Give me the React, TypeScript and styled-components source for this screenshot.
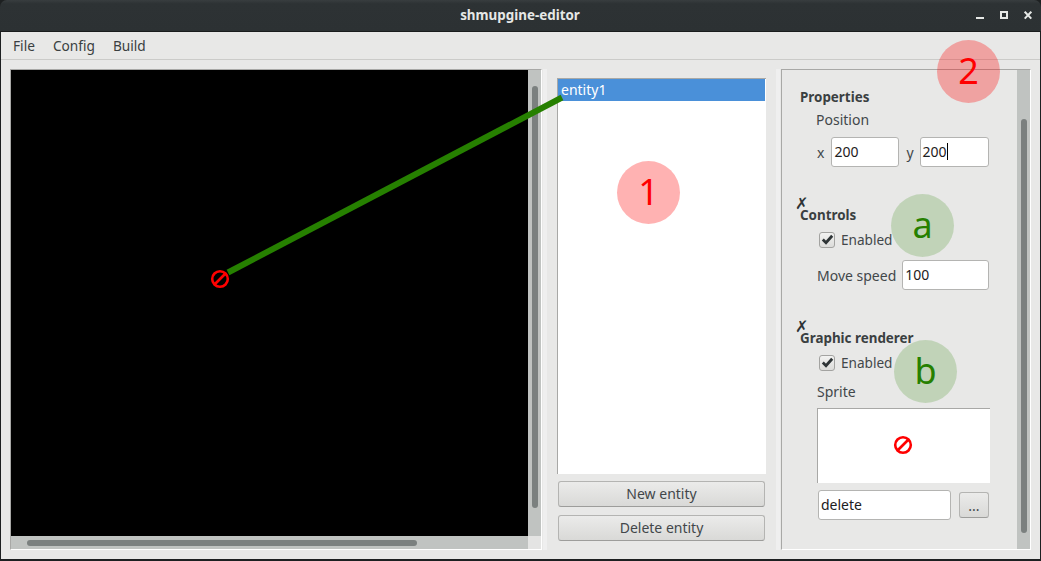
import styled, { createGlobalStyle } from "styled-components";

const GlobalStyle = createGlobalStyle`
  html, body {
    margin: 0;
    background: #1d2021;
  }
  body {
    width: 1041px;
    height: 561px;
    overflow: hidden;
    font-family: "Noto Sans", "Open Sans", sans-serif;
    font-size: 14px;
    color: #2e3436;
  }
`;

const Window = styled.div`
  position: relative;
  width: 1041px;
  height: 561px;
  box-sizing: border-box;
  padding: 0 1px 2px 1px;
  display: flex;
  flex-direction: column;
`;

const TitleBar = styled.div`
  height: 32px;
  flex: none;
  margin: 0 -1px;
  padding: 0 7px 0 0;
  border-radius: 7px 7px 0 0;
  border-bottom: 1px solid #1a1c1d;
  box-sizing: border-box;
  background: linear-gradient(#383d3f, #2d3234 12%, #2c3133);
  display: flex;
  align-items: center;
  justify-content: flex-end;
  position: relative;
`;

const Title = styled.div`
  position: absolute;
  left: -1px;
  right: 0;
  top: 6px;
  text-align: center;
  font-weight: 700;
  font-size: 13.4px;
  line-height: 19px;
  color: #e6e8e6;
`;

const WindowControls = styled.div`
  display: flex;
  gap: 16px;
  margin-right: 2px;
`;

const MenuBar = styled.div`
  height: 28px;
  flex: none;
  box-sizing: border-box;
  border-bottom: 1px solid #cbcbc9;
  background: #e8e8e7;
  display: flex;
  align-items: center;
  gap: 18px;
  padding: 0 0 1px 12px;
  line-height: 19px;
  font-size: 13.7px;
`;

const MenuItem = styled.span`
  color: #3a3f41;
`;

const Main = styled.div`
  flex: 1;
  min-height: 0;
  background: #e8e8e7;
  display: flex;
  padding: 9px 8px 9px 9px;
`;

const ViewPanel = styled.div`
  width: 532px;
  flex: none;
  box-sizing: border-box;
  border-top: 1px solid #a8a8a6;
  border-left: 1px solid #a8a8a6;
  border-right: 1px solid #fff;
  border-bottom: 1px solid #fff;
  display: grid;
  grid-template-columns: 1fr 13px;
  grid-template-rows: 1fr 13px;
`;

const Viewport = styled.div`
  background: #000;
  position: relative;
`;

const NoEntryMark = styled.div`
  position: absolute;
  left: 199px;
  top: 199px;
`;

const VScrollTrack = styled.div<{ $top: number; $bottom: number }>`
  width: 13px;
  flex: none;
  box-sizing: border-box;
  background: #c0c3c1;
  display: flex;
  justify-content: center;
  padding: ${(p) => p.$top}px 0 ${(p) => p.$bottom}px;
`;

const VScrollThumb = styled.div`
  width: 6px;
  border-radius: 3px;
  background: #7b807f;
`;

const HScrollTrack = styled.div`
  background: #c0c3c1;
  display: flex;
  align-items: center;
  padding-left: 16px;
`;

const HScrollThumb = styled.div`
  width: 390px;
  height: 6px;
  border-radius: 3px;
  background: #7b807f;
`;

const ScrollCorner = styled.div`
  background: #e4e4e3;
`;

const Splitter = styled.div<{ $width: number; $dots: number }>`
  width: ${(p) => p.$width}px;
  flex: none;
  position: relative;
  &::before {
    content: "";
    position: absolute;
    left: ${(p) => p.$dots}px;
    top: 0;
    bottom: 0;
    width: 4px;
    background-image: radial-gradient(rgba(255, 255, 255, 0.7) 0.6px, transparent 0.8px);
    background-size: 2px 2px;
  }
`;

const EntityColumn = styled.div`
  width: 209px;
  flex: none;
  padding: 9px 0 9px;
  box-sizing: border-box;
  display: flex;
  flex-direction: column;
`;

const EntityList = styled.div`
  flex: 1;
  background: #fff;
  border-top: 1px solid #a8a8a6;
  border-left: 1px solid #a8a8a6;
  padding-right: 1px;
  margin-bottom: 7px;
`;

const EntityRow = styled.div`
  height: 22px;
  line-height: 21px;
  padding-left: 3px;
  background: #4a90d9;
  color: #fff;
`;

const PushButton = styled.div`
  height: 26px;
  margin: 0 1px;
  box-sizing: border-box;
  border: 1px solid #b4b4b2;
  border-bottom-color: #9d9d9b;
  border-radius: 3px;
  background: linear-gradient(#ebebea, #d9d9d7);
  display: flex;
  align-items: center;
  justify-content: center;
  padding-bottom: 2px;
  color: #42474a;
  line-height: 19px;
  & + & {
    margin-top: 8px;
  }
`;

const PropsPanel = styled.div`
  width: 250px;
  flex: none;
  box-sizing: border-box;
  border-top: 1px solid #a8a8a6;
  border-left: 1px solid #a8a8a6;
  border-right: 1px solid #fff;
  border-bottom: 1px solid #fff;
  display: flex;
`;

const PropsBody = styled.div`
  flex: 1;
  padding: 17px 0 0 18px;
`;

const GroupTitle = styled.div`
  font-weight: 700;
  font-size: 13.4px;
  line-height: 21px;
  margin-bottom: -2px;
  color: #3a3f41;
`;

const GroupCheck = styled.div<{ $gap: number }>`
  margin-top: ${(p) => p.$gap}px;
  height: 8px;
  margin-left: -5px;
  font-size: 16px;
  line-height: 12px;
  color: #2e3436;
`;

const FieldLabel = styled.div<{ $top: number; $left: number }>`
  margin: ${(p) => p.$top}px 0 0 ${(p) => p.$left}px;
  line-height: 19px;
  color: #42474a;
`;

const FieldRow = styled.div<{ $top: number; $left: number }>`
  display: flex;
  align-items: center;
  margin: ${(p) => p.$top}px 0 0 ${(p) => p.$left}px;
  color: #42474a;
  line-height: 19px;
`;

const AxisLabel = styled.span`
  margin-left: 7px;
`;

const Input = styled.div<{ $width: number; $left: number }>`
  width: ${(p) => p.$width}px;
  height: 30px;
  margin-left: ${(p) => p.$left}px;
  box-sizing: border-box;
  padding-left: 2px;
  border: 1px solid #b4b4b2;
  border-radius: 3px;
  background: #fff;
  color: #1d2021;
  line-height: 27px;
  flex: none;
`;

const Caret = styled.span`
  display: inline-block;
  width: 1px;
  height: 17px;
  background: #000;
  vertical-align: -3px;
`;

const CheckRow = styled.div<{ $top: number }>`
  display: flex;
  align-items: center;
  gap: 6px;
  margin: ${(p) => p.$top}px 0 0 19px;
  line-height: 19px;
  font-size: 13.6px;
  color: #42474a;
`;

const CheckBox = styled.div`
  width: 16px;
  height: 16px;
  box-sizing: border-box;
  border: 1px solid #a3a3a1;
  border-radius: 3px;
  background: linear-gradient(#f2f2f1, #dcdcda);
  display: flex;
  align-items: center;
  justify-content: center;
`;

const SpritePreview = styled.div`
  width: 173px;
  height: 75px;
  margin: 7px 0 0 17px;
  box-sizing: border-box;
  background: #fff;
  border-top: 1px solid #a8a8a6;
  border-left: 1px solid #a8a8a6;
  display: flex;
  align-items: center;
  justify-content: center;
  padding: 0 3px 2px 0;
`;

const BrowseButton = styled.div`
  width: 30px;
  height: 26px;
  margin-left: 8px;
  box-sizing: border-box;
  border: 1px solid #b4b4b2;
  border-bottom-color: #9d9d9b;
  border-radius: 3px;
  background: linear-gradient(#ebebea, #d9d9d7);
  display: flex;
  align-items: center;
  justify-content: center;
  color: #42474a;
`;

const Overlay = styled.svg`
  position: absolute;
  left: 0;
  top: 0;
  pointer-events: none;
`;

const Badge = styled.div<{ $x: number; $y: number; $green?: boolean }>`
  position: absolute;
  left: ${(p) => p.$x - 31}px;
  top: ${(p) => p.$y - 31}px;
  width: 63px;
  height: 63px;
  border-radius: 50%;
  background: ${(p) => (p.$green ? "rgba(38, 128, 0, 0.2)" : "rgba(255, 0, 0, 0.3)")};
  color: ${(p) => (p.$green ? "#268000" : "#ff0000")};
  font-size: 36px;
  line-height: 61px;
  text-align: center;
`;

const NoEntry = ({ size }: { size: number }) => (
  <svg width={size} height={size} viewBox="0 0 20 20">
    <circle cx="10" cy="10" r="7.8" fill="none" stroke="#ff0000" strokeWidth="2.6" />
    <line x1="5" y1="15" x2="15" y2="5" stroke="#ff0000" strokeWidth="2.6" />
  </svg>
);

const Check = () => (
  <svg width="13" height="13" viewBox="0 0 13 13">
    <path d="M1.8 6.6 L5 9.8 L11.2 2.8" fill="none" stroke="#2e3436" strokeWidth="2.8" />
  </svg>
);

export default function App() {
  return (
    <>
      <GlobalStyle />
      <Window>
        <TitleBar>
          <Title>shmupgine-editor</Title>
          <WindowControls>
            <svg width="8" height="9" viewBox="0 0 8 9">
              <rect x="0" y="6" width="8" height="2" fill="#e6e8e6" />
            </svg>
            <svg width="8" height="9" viewBox="0 0 8 9">
              <rect x="1" y="1" width="6" height="6" fill="none" stroke="#e6e8e6" strokeWidth="2" />
            </svg>
            <svg width="8" height="9" viewBox="0 0 8 9">
              <path d="M0.7 0.7 L7.3 7.6 M7.3 0.7 L0.7 7.6" stroke="#e6e8e6" strokeWidth="2" />
            </svg>
          </WindowControls>
        </TitleBar>
        <MenuBar>
          <MenuItem>File</MenuItem>
          <MenuItem>Config</MenuItem>
          <MenuItem>Build</MenuItem>
        </MenuBar>
        <Main>
          <ViewPanel>
            <Viewport>
              <NoEntryMark>
                <NoEntry size={20} />
              </NoEntryMark>
            </Viewport>
            <VScrollTrack $top={16} $bottom={28}>
              <VScrollThumb />
            </VScrollTrack>
            <HScrollTrack>
              <HScrollThumb />
            </HScrollTrack>
            <ScrollCorner />
          </ViewPanel>
          <Splitter $width={15} $dots={1} />
          <EntityColumn>
            <EntityList>
              <EntityRow>entity1</EntityRow>
            </EntityList>
            <PushButton>New entity</PushButton>
            <PushButton>Delete entity</PushButton>
          </EntityColumn>
          <Splitter $width={15} $dots={10} />
          <PropsPanel>
            <PropsBody>
              <GroupTitle>Properties</GroupTitle>
              <FieldLabel $top={4} $left={16}>Position</FieldLabel>
              <FieldRow $top={8} $left={17}>
                x
                <Input $width={68} $left={7}>200</Input>
                <AxisLabel>y</AxisLabel>
                <Input $width={69} $left={6}>
                  200
                  <Caret />
                </Input>
              </FieldRow>
              <GroupCheck $gap={30}>✗</GroupCheck>
              <GroupTitle>Controls</GroupTitle>
              <CheckRow $top={6}>
                <CheckBox>
                  <Check />
                </CheckBox>
                Enabled
              </CheckRow>
              <FieldRow $top={11} $left={17}>
                Move speed
                <Input $width={87} $left={6}>100</Input>
              </FieldRow>
              <GroupCheck $gap={30}>✗</GroupCheck>
              <GroupTitle>Graphic renderer</GroupTitle>
              <CheckRow $top={6}>
                <CheckBox>
                  <Check />
                </CheckBox>
                Enabled
              </CheckRow>
              <FieldLabel $top={10} $left={17}>Sprite</FieldLabel>
              <SpritePreview>
                <NoEntry size={20} />
              </SpritePreview>
              <FieldRow $top={7} $left={18}>
                <Input $width={133} $left={0}>delete</Input>
                <BrowseButton>...</BrowseButton>
              </FieldRow>
            </PropsBody>
            <VScrollTrack $top={49} $bottom={16}>
              <VScrollThumb />
            </VScrollTrack>
          </PropsPanel>
        </Main>
        <Overlay width="1041" height="561">
          <line x1="228" y1="272.5" x2="562" y2="97.5" stroke="#268000" strokeWidth="6" />
        </Overlay>
        <Badge $x={648} $y={192}>1</Badge>
        <Badge $x={968} $y={71}>2</Badge>
        <Badge $x={922} $y={225} $green>a</Badge>
        <Badge $x={925} $y={371} $green>b</Badge>
      </Window>
    </>
  );
}
